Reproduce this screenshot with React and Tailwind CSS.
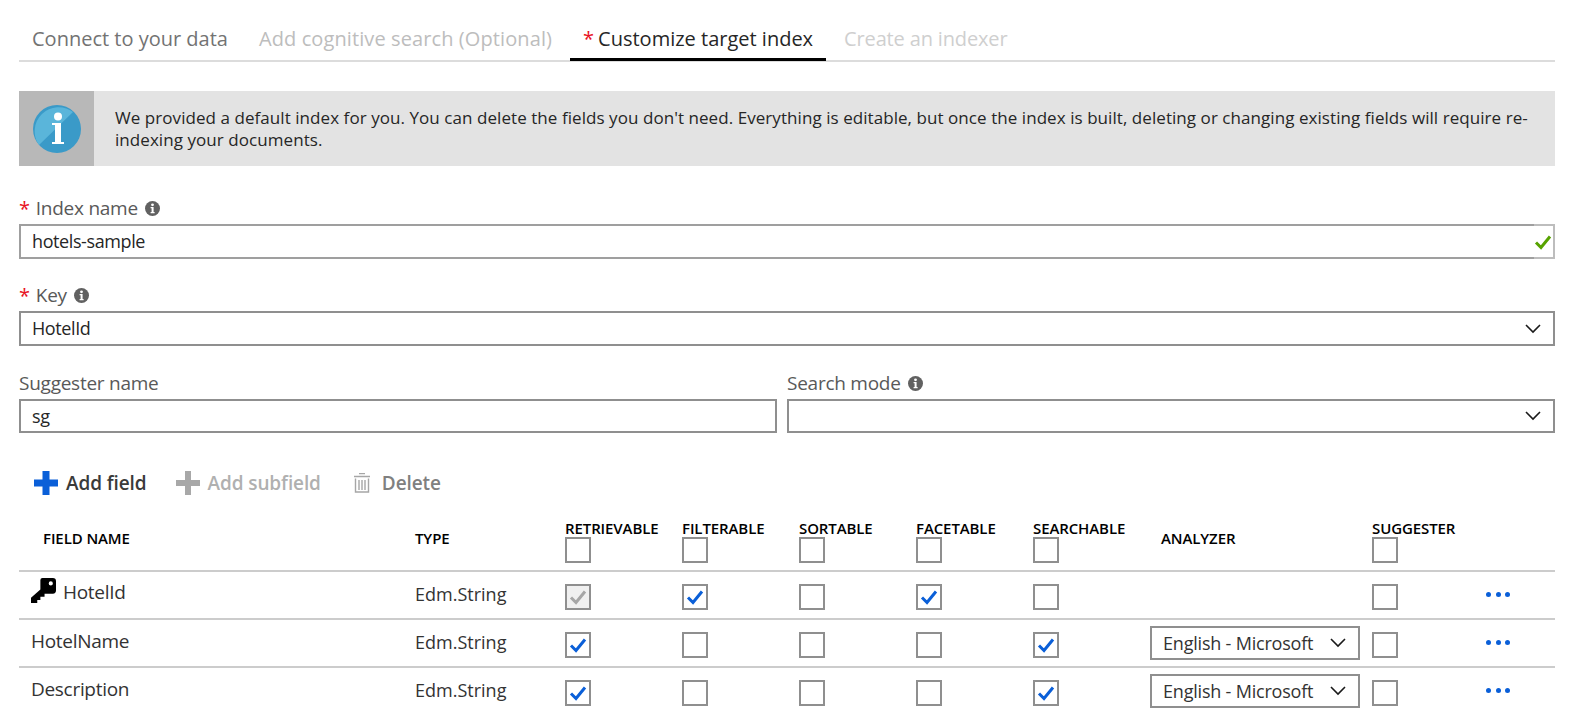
const font = { fontFamily: '"Open Sans", "Noto Sans", sans-serif' };

const InfoDot = () => (
  <svg width="15" height="15" viewBox="0 0 15 15" className="shrink-0">
    <circle cx="7.5" cy="7.5" r="7.5" fill="#616161" />
    <circle cx="7.5" cy="3.8" r="1.4" fill="#fff" />
    <path d="M5.6 6.1h3v4.9h1v1.2H5.6V11h1V7.3h-1z" fill="#fff" />
  </svg>
);

const Chevron = () => (
  <svg width="16" height="10" viewBox="0 0 16 10" fill="none" className="shrink-0">
    <path d="M1 1l7 7 7-7" stroke="#1a1a1a" strokeWidth="1.6" />
  </svg>
);

const Check = ({ color = '#0a5fd8' }) => (
  <svg width="18" height="16" viewBox="0 0 18 16" fill="none">
    <path d="M2 8.5l5 5L16 2.5" stroke={color} strokeWidth="3" />
  </svg>
);

const Checkbox = ({ checked, disabled }) => (
  <div
    className={`w-[26px] h-[26px] border-2 border-[#8f8f8f] flex items-center justify-center ${
      disabled ? 'bg-[#f0f0f0]' : 'bg-white'
    }`}
  >
    {checked && <Check color={disabled ? '#a6a6a6' : '#0a5fd8'} />}
  </div>
);

const Tab = ({ label, color, active, required }) => (
  <div
    className={`h-[43px] px-[13px] pt-[1px] flex items-center text-[20px] whitespace-nowrap border-b-[3px] ${
      active ? 'border-black' : 'border-transparent'
    } ${color}`}
  >
    {required && <span className="text-[#e81123] mr-[4px]">*</span>}
    {label}
  </div>
);

const Label = ({ text, required, info }) => (
  <div className="h-[33px] pt-[2px] flex items-center gap-[7px] text-[19px] tracking-[-0.25px] text-[#595959]">
    {required && <span className="text-[#e81123] text-[20px] -mr-[1px]">*</span>}
    <span>{text}</span>
    {info && <InfoDot />}
  </div>
);

const SelectBox = ({ value, short }) => (
  <div className={`${short ? 'h-[34px]' : 'h-[35px]'} border-2 border-[#8f8f8f] pl-[11px] pr-[12px] flex items-center justify-between text-[18px] tracking-[-0.4px] text-[#262626]`}>
    <span>{value}</span>
    <Chevron />
  </div>
);

const Analyzer = () => (
  <div className="w-[210px] h-[34px] -mt-[6px] border-2 border-[#8f8f8f] pl-[11px] pr-[12px] flex items-center justify-between text-[18px] tracking-[-0.2px] text-[#333]">
    <span>English - Microsoft</span>
    <Chevron />
  </div>
);

const KeyIcon = () => (
  <svg width="25" height="25" viewBox="0 0 24 24" className="shrink-0">
    <path
      fillRule="evenodd"
      d="M11 0h10q3 0 3 3v9q0 3-3 3h-8v3H9v3H6v3H0v-5l9-8V2q0-2 2-2zm8 3.2a2 2 0 1 0 0 4 2 2 0 0 0 0-4z"
      fill="#000"
    />
  </svg>
);

const gridCols = 'grid grid-cols-[396px_150px_117px_117px_117px_117px_117px_222px_114px_1fr]';
const headText = 'text-[15px] leading-[20px] font-semibold tracking-[-0.1px] text-black whitespace-nowrap';

const HeadCheck = ({ title }) => (
  <div className="flex flex-col">
    <div className={`h-[27px] pt-[8px] ${headText}`}>{title}</div>
    <Checkbox />
  </div>
);

const Dots = () => (
  <div className="flex gap-[4.5px] pt-[8px]">
    <span className="w-[5px] h-[5px] rounded-full bg-[#0a5fd8]" />
    <span className="w-[5px] h-[5px] rounded-full bg-[#0a5fd8]" />
    <span className="w-[5px] h-[5px] rounded-full bg-[#0a5fd8]" />
  </div>
);

const rows = [
  { name: 'HotelId', hasKey: true, checks: [2, 1, 0, 1, 0], analyzer: false },
  { name: 'HotelName', checks: [1, 0, 0, 0, 1], analyzer: true },
  { name: 'Description', checks: [1, 0, 0, 0, 1], analyzer: true },
];

const App = () => {
  return (
    <div style={font} className="w-[1573px] h-[712px] overflow-hidden bg-white pl-[19px] pr-[18px] pt-[18px]">
      <div className="flex gap-[5px] border-b-2 border-[#dcdcdc] h-[44px]">
        <Tab label="Connect to your data" color="text-[#737373]" />
        <Tab label="Add cognitive search (Optional)" color="text-[#bdbdbd] tracking-[0.1px]" />
        <Tab label="Customize target index" color="text-[#262626]" active required />
        <Tab label="Create an indexer" color="text-[#cfcfcf] tracking-[-0.15px]" />
      </div>

      <div className="mt-[29px] h-[75px] flex bg-[#e3e3e3]">
        <div className="w-[75px] bg-[#b8b8b8] flex items-center justify-center shrink-0">
          <svg width="48" height="48" viewBox="0 0 48 48">
            <circle cx="24" cy="24" r="24" fill="#3a9ac8" />
            <path d="M40 7A24 24 0 0 0 6 40z" fill="#5ab5da" />
            <circle cx="25" cy="11.5" r="4" fill="#fff" />
            <path d="M19 18h9v19h3v2H19v-2h3V20h-3z" fill="#fff" />
          </svg>
        </div>
        <div className="pl-[21px] pr-[20px] pt-[16px] text-[17px] leading-[22px] tracking-[0.06px] text-[#262626]">
          We provided a default index for you. You can delete the fields you don't need. Everything is editable, but once the index is built, deleting or changing existing fields will require re-indexing your documents.
        </div>
      </div>

      <div className="mt-[25px]">
        <Label text="Index name" required info />
        <div className="h-[35px] flex text-[18px] tracking-[-0.4px] text-[#262626]">
          <div className="flex-1 border-y-2 border-l-2 border-[#9f9f9f] pl-[11px] flex items-center">hotels-sample</div>
          <div className="w-[21px] border-y-2 border-r-2 border-[#bdbdbd] flex items-center -ml-[1px]">
            <Check color="#57a300" />
          </div>
        </div>
      </div>

      <div className="mt-[19px]">
        <Label text="Key" required info />
        <SelectBox value="HotelId" />
      </div>

      <div className="mt-[20px] flex gap-[10px]">
        <div className="w-[758px]">
          <Label text="Suggester name" />
          <div className="h-[34px] border-2 border-[#8f8f8f] pl-[11px] flex items-center text-[18px] tracking-[-0.4px] text-[#262626]">sg</div>
        </div>
        <div className="flex-1">
          <Label text="Search mode" info />
          <SelectBox value="" short />
        </div>
      </div>

      <div className="mt-[38px] h-[24px] pl-[15px] flex items-center text-[19px] font-semibold tracking-[-0.1px]">
        <svg width="24" height="24" viewBox="0 0 24 24" className="mr-[8px]">
          <path d="M8.500 0h7v8.500H24v7h-8.500V24h-7v-8.500H0v-7h8.500z" fill="#0a5fd8" />
        </svg>
        <span className="text-[#3a3a3a]">Add field</span>
        <svg width="24" height="24" viewBox="0 0 24 24" className="ml-[29px] mr-[8px]">
          <path d="M9 0h6v9h9v6h-9v9H9v-9H0V9h9z" fill="#a8a8a8" />
        </svg>
        <span className="text-[#b0b0b0]">Add subfield</span>
        <svg width="16" height="20" viewBox="0 0 16 20" fill="none" stroke="#a6a6a6" className="ml-[33px] mr-[12px]">
          <path d="M5 .5h6M0 3.500h16M1.500 5.500v13.500h13V5.500M5 7v10M8 7v10M11 7v10" strokeWidth="1.400" />
        </svg>
        <span className="text-[#808080]">Delete</span>
      </div>

      <div className={`${gridCols} mt-[15px] h-[62px] border-b-2 border-[#cccccc]`}>
        <div className={`pl-[24px] pt-[18px] ${headText}`}>FIELD NAME</div>
        <div className={`pt-[18px] ${headText}`}>TYPE</div>
        <HeadCheck title="RETRIEVABLE" />
        <HeadCheck title="FILTERABLE" />
        <HeadCheck title="SORTABLE" />
        <HeadCheck title="FACETABLE" />
        <HeadCheck title="SEARCHABLE" />
        <div className={`pl-[11px] pt-[18px] ${headText}`}>ANALYZER</div>
        <HeadCheck title="SUGGESTER" />
        <div />
      </div>

      {rows.map((row) => (
        <div key={row.name} className={`${gridCols} h-[48px] border-b-2 border-[#cccccc] pt-[12px]`}>
          <div className={`flex items-start text-[19px] tracking-[-0.3px] text-[#333] pl-[12px] ${row.hasKey ? '-mt-[6px] gap-[7px]' : '-mt-[5px]'}`}>
            {row.hasKey && <KeyIcon />}
            <span>{row.name}</span>
          </div>
          <div className="text-[18px] -mt-[3px] text-[#333]">Edm.String</div>
          {row.checks.map((c, i) => (
            <Checkbox key={i} checked={c > 0} disabled={c === 2} />
          ))}
          <div>{row.analyzer && <Analyzer />}</div>
          <Checkbox />
          <Dots />
        </div>
      ))}
    </div>
  );
};

export default App;
